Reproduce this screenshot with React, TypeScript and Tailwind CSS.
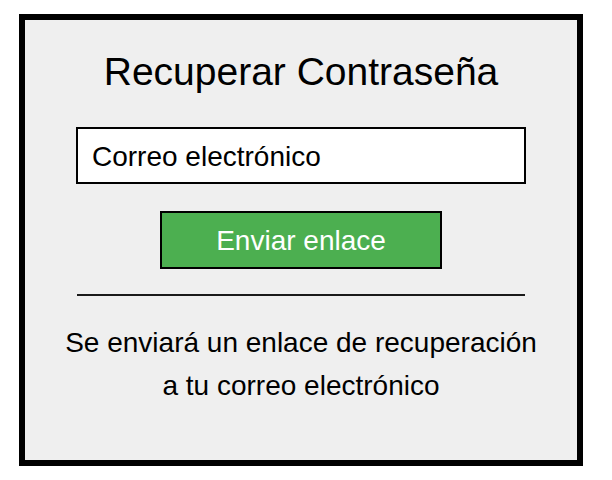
export default function App() {
  return (
    <main className="min-h-screen bg-white pl-[19px] pt-[14px] font-['Liberation_Sans',Arial,sans-serif] text-black">
      <div className="flex h-[452px] w-[564px] flex-col items-center border-[6px] border-black bg-[#efefef] pt-[30px]">
        <h1 className="text-[39px] leading-[44px] font-normal">Recuperar Contraseña</h1>

        <div className="mt-[33px] flex h-[57px] w-[450px] items-center border-2 border-black bg-white px-[14px] pt-[2px] text-[28px]">
          Correo electrónico
        </div>

        <button
          type="button"
          className="mt-[27px] flex h-[58px] w-[282px] items-center justify-center border-2 border-black bg-[#4caf50] pt-[1px] text-[28px] text-white"
        >
          Enviar enlace
        </button>

        <div className="mt-[25px] h-[2px] w-[448px] bg-[#1a1a1a]" />

        <p className="mt-[25px] text-center text-[28px] leading-[43px]">
          Se enviará un enlace de recuperación
          <br />
          a tu correo electrónico
        </p>
      </div>
    </main>
  )
}
